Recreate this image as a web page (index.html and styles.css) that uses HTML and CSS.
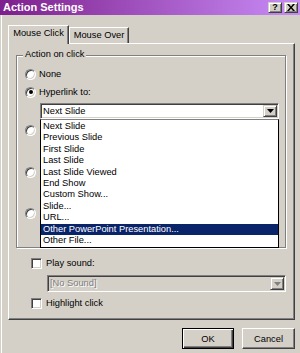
FILE: index.html
```html
<!DOCTYPE html>
<html>
<head>
<meta charset="utf-8">
<title>Action Settings</title>
<link rel="stylesheet" href="styles.css">
</head>
<body>
<div class="dialog">
  <div class="titlebar">
    <span class="title">Action Settings</span>
    <div class="caption-btns">
      <span class="cbtn help">?</span>
      <span class="cbtn close"><svg width="8" height="7" viewBox="0 0 8 7"><path d="M0 0h2l2 2.4L6 0h2L5 3.5 8 7H6L4 4.6 2 7H0l3-3.5z" fill="#000"/></svg></span>
    </div>
  </div>
  <div class="client">
    <div class="tabs">
      <div class="tab active">Mouse Click</div>
      <div class="tab">Mouse Over</div>
    </div>
    <div class="panel">
      <div class="group">
        <span class="legend">Action on click</span>
        <div class="row"><span class="radio"></span><span class="label">None</span></div>
        <div class="row"><span class="radio checked"></span><span class="label">Hyperlink to:</span></div>
        <div class="select"><span class="value">Next Slide</span><span class="drop"><svg width="7" height="4" viewBox="0 0 7 4"><path d="M0 0h7L3.5 4z" fill="#000"/></svg></span></div>
        <div class="row gap-s"><span class="radio"></span></div>
        <div class="row gap-l"><span class="radio"></span></div>
        <div class="row gap-m"><span class="radio"></span></div>
      </div>
      <div class="check-row first"><span class="checkbox"></span><span class="label">Play sound:</span></div>
      <div class="combo disabled"><span class="value">[No Sound]</span><span class="drop"><svg width="7" height="4" viewBox="0 0 7 4"><path d="M0 0h7L3.5 4z" fill="#808080"/></svg></span></div>
      <div class="check-row second"><span class="checkbox"></span><span class="label">Highlight click</span></div>
    </div>
    <div class="buttons">
      <button class="btn ok default">OK</button>
      <button class="btn cancel">Cancel</button>
    </div>
  </div>
  <ul class="listbox">
    <li>Next Slide</li>
    <li>Previous Slide</li>
    <li>First Slide</li>
    <li>Last Slide</li>
    <li>Last Slide Viewed</li>
    <li>End Show</li>
    <li>Custom Show...</li>
    <li>Slide...</li>
    <li>URL...</li>
    <li class="sel">Other PowerPoint Presentation...</li>
    <li>Other File...</li>
  </ul>
</div>
</body>
</html>
```
FILE: styles.css
```css
* {
  box-sizing: border-box;
  margin: 0;
  padding: 0;
}
html, body {
  width: 300px;
  height: 353px;
  overflow: hidden;
}
body {
  background: #d4d0c8;
  font-family: "Liberation Sans", Arial, sans-serif;
  font-size: 9.3px;
  color: #000;
}
.dialog {
  position: relative;
  width: 300px;
  height: 353px;
  background: #d4d0c8;
}
.titlebar {
  height: 15px;
  display: flex;
  align-items: center;
  justify-content: space-between;
  padding: 0 2px 0 3px;
  background: linear-gradient(to right, #7d1f8c, #c88cf7);
}
.title {
  color: #fff;
  font-weight: bold;
  font-size: 11px;
  line-height: 15px;
}
.caption-btns {
  display: flex;
  gap: 2px;
}
.cbtn {
  width: 14px;
  height: 11px;
  display: flex;
  align-items: center;
  justify-content: center;
  background: #d4d0c8;
  border: 1px solid;
  border-color: #d4d0c8 #404040 #404040 #d4d0c8;
  box-shadow: inset 1px 1px #fff, inset -1px -1px #808080;
  font-weight: bold;
  font-size: 9px;
  line-height: 9px;
}
.client {
  margin-left: 1px;
  border-left: 1px solid #fff;
  padding-left: 6px;
  height: 338px;
}
.tabs {
  display: flex;
  align-items: flex-end;
  height: 28px;
  padding-top: 10px;
}
.tab {
  width: 60px;
  height: 16px;
  border: 1px solid;
  border-color: #fff #404040 transparent #fff;
  border-bottom: none;
  box-shadow: inset -1px 0 #808080;
  text-align: center;
  line-height: 14px;
}
.tab.active {
  width: 61px;
  height: 19px;
  margin-bottom: -1px;
  position: relative;
  z-index: 1;
  background: #d4d0c8;
  line-height: 14px;
}
.panel {
  width: 287px;
  height: 277px;
  border: 1px solid;
  border-color: #fff #404040 #404040 #fff;
  box-shadow: inset -1px -1px #808080;
  padding: 11px 0 0 7px;
}
.group {
  position: relative;
  width: 270px;
  height: 193px;
  border: 1px solid #808080;
  box-shadow: inset 1px 1px #fff, 1px 1px #fff;
  padding-top: 9px;
}
.legend {
  position: absolute;
  top: -7px;
  left: 6px;
  padding: 0 2px;
  background: #d4d0c8;
  line-height: 11px;
}
.row {
  display: flex;
  align-items: center;
  height: 18px;
  margin-left: 8px;
}
.row.gap-s { margin-top: 2px; }
.row.gap-l { margin-top: 24px; }
.row.gap-m { margin-top: 23px; }
.label {
  margin-left: 3px;
  line-height: 12px;
  white-space: nowrap;
}
.radio {
  position: relative;
  flex: none;
  width: 11px;
  height: 11px;
  border-radius: 50%;
  background: #fff;
  border: 1px solid;
  border-color: #808080 #fff #fff #808080;
  box-shadow: inset 1px 1px #404040, inset -1px -1px #d4d0c8;
}
.radio.checked::after {
  content: "";
  position: absolute;
  left: 2.5px;
  top: 2.5px;
  width: 4px;
  height: 4px;
  border-radius: 50%;
  background: #000;
}
.checkbox {
  flex: none;
  width: 11px;
  height: 11px;
  background: #fff;
  border: 1px solid;
  border-color: #808080 #fff #fff #808080;
  box-shadow: inset 1px 1px #404040, inset -1px -1px #d4d0c8;
}
.select, .combo {
  display: flex;
  align-items: stretch;
  width: 239px;
  padding: 1px;
  border: 1px solid;
  border-color: #808080 #fff #fff #808080;
  box-shadow: inset 1px 1px #404040, inset -1px -1px #d4d0c8;
}
.select {
  height: 16px;
  margin: 2px 0 0 23px;
  background: #fff;
}
.value {
  flex: 1;
  padding-left: 1px;
  line-height: 12px;
  white-space: nowrap;
}
.drop {
  flex: none;
  width: 14px;
  display: flex;
  align-items: center;
  justify-content: center;
  background: #d4d0c8;
  border: 1px solid;
  border-color: #d4d0c8 #404040 #404040 #d4d0c8;
  box-shadow: inset 1px 1px #fff, inset -1px -1px #808080;
}
.check-row {
  display: flex;
  align-items: center;
  height: 18px;
  margin-left: 15px;
}
.check-row .label { margin-left: 4px; }
.check-row.first { margin-top: 6px; }
.check-row.second { margin-top: 2px; }
.combo {
  height: 17px;
  margin: 3px 0 0 31px;
  background: #d4d0c8;
}
.combo .value {
  color: #808080;
  text-shadow: 1px 1px 0 #fff;
  line-height: 13px;
}
.buttons {
  width: 287px;
  display: flex;
  justify-content: flex-end;
  gap: 8px;
  margin-top: 8px;
}
.btn {
  height: 21px;
  font: inherit;
  color: #000;
  background: #d4d0c8;
  border: 1px solid;
  border-color: #fff #404040 #404040 #fff;
  box-shadow: inset -1px -1px #808080;
}
.btn.ok { width: 52px; }
.btn.cancel { width: 53px; }
.btn.default {
  border: 1px solid #000;
  box-shadow: inset 1px 1px #fff, inset -1px -1px #404040, inset -2px -2px #808080;
}
.listbox {
  position: absolute;
  left: 40px;
  top: 119px;
  width: 239px;
  height: 129px;
  padding-top: 1px;
  background: #fff;
  border: 1px solid #000;
  border-top-color: #808080;
  list-style: none;
}
.listbox li {
  height: 11.4px;
  line-height: 11.4px;
  padding-left: 2px;
  white-space: nowrap;
}
.listbox li.sel {
  background: #0a246a;
  color: #fff;
}
```
